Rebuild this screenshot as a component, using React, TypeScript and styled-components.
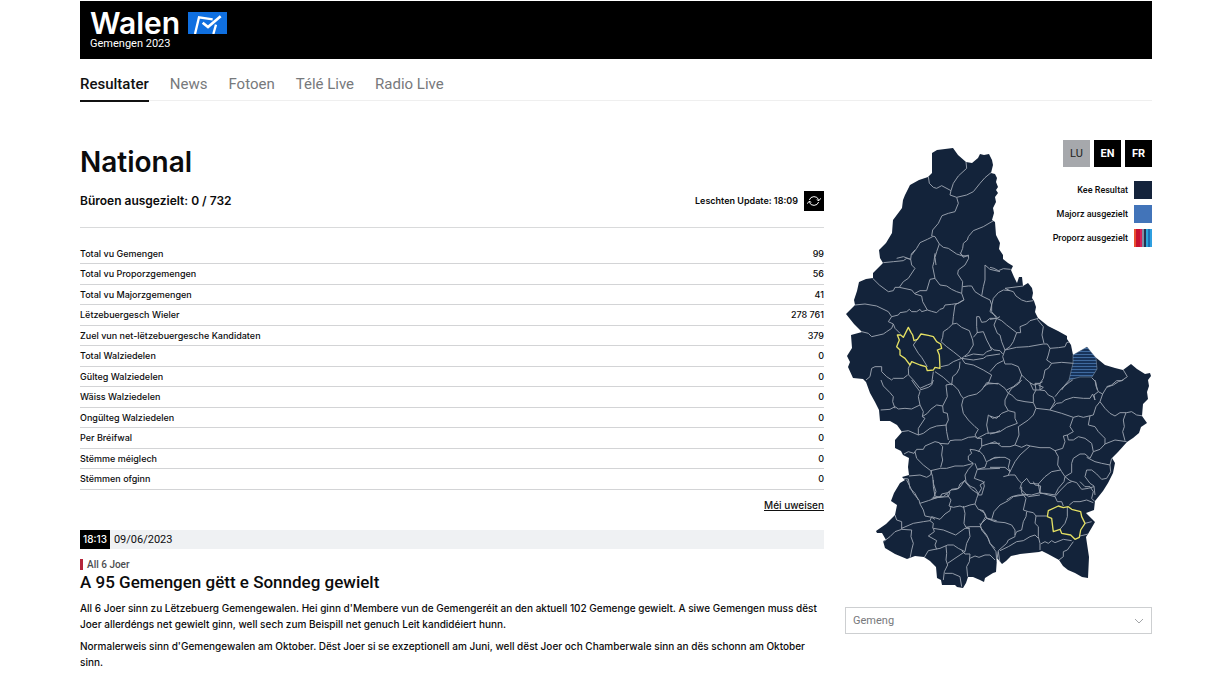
import React from "react";
import styled, { createGlobalStyle } from "styled-components";

const display = `Inter, "Liberation Sans", sans-serif`;

const GlobalStyle = createGlobalStyle`
  * { box-sizing: border-box; }
  body {
    margin: 0;
    background: #fff;
    color: #0b0b0c;
    font-family: Roboto, "Liberation Sans", sans-serif;
  }
  button, select { font-family: inherit; }
`;

const Page = styled.div`
  padding: 1px 72px 16px 80px;
`;

const Header = styled.header`
  height: 58px;
  padding: 8px 10px;
  background: #000;
  color: #fff;
`;

const Brand = styled.div`
  display: flex;
  align-items: center;
  gap: 8px;
  height: 28px;
`;

const BrandName = styled.span`
  font-family: ${display};
  font-size: 30px;
  line-height: 28px;
  font-weight: 600;
`;

const BrandSub = styled.div`
  font-size: 11px;
  line-height: 14px;
`;

const Nav = styled.nav`
  display: flex;
  gap: 21px;
  height: 42px;
  border-bottom: 1px solid #efefef;
`;

const NavLink = styled.a<{ $active?: boolean }>`
  height: 43px;
  padding-top: 15px;
  border-bottom: 2px solid ${(p) => (p.$active ? "#111" : "transparent")};
  color: ${(p) => (p.$active ? "#111" : "#77797c")};
  font-size: 15px;
  line-height: 20px;
  font-weight: ${(p) => (p.$active ? 500 : 400)};
  text-decoration: none;
`;

const Columns = styled.main`
  display: grid;
  grid-template-columns: minmax(0, 744fr) minmax(0, 307fr);
  gap: 21px;
  padding-top: 39px;
`;

const Title = styled.h1`
  margin: 4px 0 0;
  font-family: ${display};
  font-size: 28px;
  line-height: 36px;
  font-weight: 600;
`;

const StatusBar = styled.div`
  display: flex;
  align-items: center;
  justify-content: space-between;
  height: 48px;
  padding-bottom: 6px;
  font-family: ${display};
  border-bottom: 1px solid #d9dadb;
`;

const Status = styled.strong`
  font-size: 12px;
  line-height: 20px;
  font-weight: 600;
`;

const Update = styled.div`
  display: flex;
  align-items: center;
  gap: 6px;
  font-size: 9px;
  font-weight: 600;
`;

const RefreshButton = styled.button`
  display: flex;
  align-items: center;
  justify-content: center;
  width: 20px;
  height: 20px;
  padding: 0;
  border: 0;
  background: #000;
  color: #fff;
`;

const Figures = styled.table`
  width: 100%;
  height: 246px;
  margin-top: 16px;
  border-collapse: collapse;
  font-family: ${display};
  font-size: 9px;
  line-height: 12px;

  th, td {
    padding: 0;
    border-bottom: 1px solid #d3d4d6;
    font-weight: 500;
    text-align: left;
  }
  td { text-align: right; }
`;

const MoreRow = styled.div`
  display: flex;
  justify-content: flex-end;
  padding-top: 7px;
`;

const MoreLink = styled.a`
  color: #111;
  font-family: ${display};
  font-size: 10px;
  line-height: 16px;
  font-weight: 500;
  text-decoration: underline;
`;

const DateBar = styled.div`
  display: flex;
  align-items: center;
  gap: 4px;
  height: 19px;
  margin-top: 17px;
  background: #eff1f3;
  font-size: 11px;
  line-height: 19px;
`;

const Clock = styled.time`
  padding: 0 3px;
  background: #000;
  color: #fff;
  font-family: ${display};
  font-size: 10px;
  font-weight: 500;
`;

const Kicker = styled.div`
  margin-top: 10px;
  padding-left: 4px;
  border-left: 3px solid #b5263a;
  color: #4c4d50;
  font-size: 10px;
  line-height: 11px;
  font-weight: 500;
`;

const Headline = styled.h2`
  margin: 2px 0 8px;
  font-size: 17px;
  line-height: 20px;
  font-weight: 500;
`;

const Text = styled.p`
  margin: 0 0 6px;
  font-family: ${display};
  font-size: 10px;
  line-height: 16px;
  font-weight: 500;
`;

const Side = styled.aside`
  position: relative;
`;

const Controls = styled.div`
  position: absolute;
  top: 0;
  right: 0;
  display: flex;
  flex-direction: column;
  align-items: flex-end;
`;

const Languages = styled.div`
  display: flex;
  gap: 4px;
  margin-bottom: 14px;
`;

const LangButton = styled.button<{ $current?: boolean }>`
  width: 27px;
  height: 27px;
  padding: 0;
  border: 0;
  background: ${(p) => (p.$current ? "#a6a8ac" : "#000")};
  color: ${(p) => (p.$current ? "#222" : "#fff")};
  font-size: 11px;
  font-weight: ${(p) => (p.$current ? 400 : 700)};
`;

const LegendItem = styled.div`
  display: flex;
  align-items: center;
  gap: 6px;
  height: 18px;
  margin-bottom: 6px;
  font-size: 9px;
  font-weight: 500;
`;

const Swatch = styled.span<{ $fill: string }>`
  width: 18px;
  height: 18px;
  background: ${(p) => p.$fill};
`;

const MapDrawing = styled.svg`
  display: block;
  width: 100%;
  margin-top: 6px;
`;

const SelectBox = styled.div`
  position: relative;
  margin-top: 15px;
`;

const Select = styled.select`
  display: block;
  width: 100%;
  height: 27px;
  padding: 0 7px;
  border: 1px solid #cdcfd1;
  border-radius: 0;
  appearance: none;
  background: #fff;
  color: #77797c;
  font-size: 11px;
`;

const Chevron = styled.svg`
  position: absolute;
  top: 11px;
  right: 8px;
  pointer-events: none;
`;

const figures: [string, string][] = [
  ["Total vu Gemengen", "99"],
  ["Total vu Proporzgemengen", "56"],
  ["Total vu Majorzgemengen", "41"],
  ["Lëtzebuergesch Wieler", "278 761"],
  ["Zuel vun net-lëtzebuergesche Kandidaten", "379"],
  ["Total Walziedelen", "0"],
  ["Gülteg Walziedelen", "0"],
  ["Wäiss Walziedelen", "0"],
  ["Ongülteg Walziedelen", "0"],
  ["Per Bréifwal", "0"],
  ["Stëmme méiglech", "0"],
  ["Stëmmen ofginn", "0"],
];

const legend: [string, string][] = [
  ["Kee Resultat", "#14233b"],
  ["Majorz ausgezielt", "#4274b9"],
  [
    "Proporz ausgezielt",
    "linear-gradient(90deg,#e8502f 0 2px,#c8102e 2px 6px,#d5205a 6px 8px,#7d8fa5 8px 10px,#26304f 10px 12px,#2aa6dc 12px 14px,#1d6fb5 14px 16px,#2f9fe0 16px)",
  ],
];

const country =
  "932,153 937,150 945,149 953,148 958,155 966,162 972,163 978,158 980,154 984,155 989,154 992,160 993,165 991,173 995,174 997,178 996,182 998,187 996,190 998,193 995,197 996,202 993,208 994,213 992,220 995,222 996,235 1000,243 999,249 1003,255 1003,259 1008,263 1013,266 1011,270 1014,277 1017,283 1019,277 1022,277 1023,286 1028,283 1032,288 1033,293 1032,298 1034,301 1036,307 1035,312 1038,318 1048,326 1058,331 1067,336 1067,339 1071,345 1073,355 1087,347 1094,356 1105,365 1115,368 1123,370 1131,364 1137,369 1145,374 1150,373 1151,376 1148,380 1149,386 1147,392 1148,399 1143,404 1142,416 1147,423 1141,427 1139,433 1133,438 1127,442 1118,452 1112,458 1115,463 1113,473 1108,483 1103,491 1095,501 1094,510 1086,513 1092,519 1095,522 1088,534 1086,537 1089,557 1088,578 1082,577 1075,573 1068,570 1063,566 1059,560 1048,554 1042,551 1039,552 1020,554 1011,556 1006,561 1002,564 997,558 996,572 993,573 985,578 984,582 980,580 973,577 968,577 966,583 963,588 957,587 955,585 942,585 941,580 937,578 936,567 930,561 924,557 915,556 907,559 895,554 885,548 883,541 886,540 882,533 877,533 876,531 886,524 895,515 897,505 891,501 894,493 900,483 905,480 902,477 909,475 908,467 909,458 903,455 901,451 895,448 895,440 902,432 897,425 890,421 880,421 879,410 875,402 870,393 866,382 863,379 853,378 848,367 850,362 847,356 852,348 851,335 862,332 854,324 846,314 855,305 854,300 857,291 859,282 866,279 873,278 873,273 883,263 880,258 879,250 886,243 892,233 893,220 902,208 903,200 905,195 910,185 919,180 928,177 932,173";

/* Municipal borders, traced per map sheet at three units to the map unit. */
const sheets: { x: number; y: number; lines: string[] }[] = [
  {
    x: 840,
    y: 140,
    lines: [
      "265,110 268,130 280,142 290,145 305,137 333,152",
      "378,65 380,85 355,108 340,130 333,152 330,165 350,172 380,165 400,155 420,130 435,113 453,98",
      "350,172 355,190 345,215 325,220 306,227 295,250 278,270 275,288 285,290",
      "278,290 262,298 240,308 230,325 215,345",
      "285,290 298,312 290,335 285,352 288,375",
      "298,312 310,322 325,325 350,342 365,347 385,348",
      "464,240 430,260 400,272 385,290 382,300 370,310 368,325 362,340 370,350",
    ],
  },
  {
    x: 840,
    y: 250,
    lines: [
      "130,38 160,35 190,32 200,25 212,28 214,12 225,0",
      "170,25 190,20 212,28 215,45 225,55 205,85 190,95 178,112",
      "98,85 118,105 145,125 160,122 165,112 178,112 215,120 225,132 245,138 248,155 262,180",
      "225,130 240,122 260,122 270,88 285,85 278,50 282,35 285,10",
      "360,8 370,22 385,15 386,25 375,45 355,60 353,72 368,95 365,130",
      "285,85 300,105 320,108 335,118 350,125 365,130",
      "365,130 372,150 355,160 335,163 315,165 310,175 300,178 290,188 275,184 262,180",
      "262,180 245,185 240,178 230,185 215,185 208,178 200,185 180,188 175,195 155,200",
      "45,165 75,162 110,168 145,185 155,200 145,215 160,222 155,235 140,245 130,252 95,260 85,250 65,245",
      "160,222 165,235 180,250",
      "368,110 385,108 395,108 405,125 425,138 430,110 435,90 435,45 450,58 480,65",
      "425,138 450,150 455,165 450,185 470,200",
      "370,150 345,165 340,200 338,222",
      "338,222 350,220 365,232 388,242 398,270 400,285 385,310 365,325",
      "338,222 325,235 310,245 308,262 303,275 320,290 340,305 365,325",
      "480,200 470,205 450,205 438,215 425,217 418,200 410,200 410,230 412,248 400,262",
      "410,248 430,245 440,270 448,285 455,300 440,305 430,315 400,312 375,320",
      "303,350 325,345 340,335 365,325",
      "365,325 375,340 400,345 430,360 455,375 445,400 430,412",
      "365,325 400,330 430,325 440,318 480,312",
      "360,335 358,355 350,370 338,380 335,405 310,382 285,365",
      "212,340 205,355 206,375 220,390 240,415 262,405 275,400 280,365",
      "78,390 90,380 95,355 105,350 125,350 125,365 140,380 155,390 160,385 190,385 203,375",
      "232,268 220,285 235,310 245,322 262,350",
    ],
  },
  {
    x: 990,
    y: 250,
    lines: [
      "0,52 12,55 25,62 40,56 62,58",
      "100,108 45,115 60,122 70,125 78,138 95,150 110,155 130,152",
      "60,122 40,120 25,128 10,145 5,165 5,185 20,205 35,212 50,225 80,248",
      "80,248 92,248 90,230 110,222 120,212 145,205",
      "142,208 160,230 156,255 162,280",
      "0,208 20,205 12,225 22,250 30,255 35,275 45,300",
      "80,248 70,275 60,290 45,300",
      "45,300 80,292 115,290 160,282 172,282 180,295 205,293 225,290 230,278 240,275",
      "180,295 175,315 170,330 185,340 215,337 250,340",
      "185,340 175,355 165,360 160,385 150,400 132,405 120,398 105,385 95,375 85,350 65,342 45,342 38,320 45,300",
      "38,312 30,302 12,300 0,290",
      "40,332 20,342 0,365",
      "95,375 88,395 70,410 50,420",
      "120,398 130,420 150,420 150,400",
      "238,390 225,405 215,420",
      "305,383 317,395 322,420",
      "400,360 412,380 395,392 380,392 365,405 350,410",
    ],
  },
  {
    x: 840,
    y: 380,
    lines: [
      "123,0 130,18 150,38 160,50 158,65 165,85",
      "122,90 150,88 165,80 175,87 195,85 215,87 225,82 240,75 235,50 240,35 225,15 215,0",
      "240,30 265,22 275,15 280,0",
      "240,75 250,95 247,110 255,115 235,145 235,165",
      "247,110 262,100 272,88 290,75 308,78 310,97 322,100 325,120 318,135 320,155 325,180",
      "308,78 322,50 318,15 335,12 340,15 355,30 362,45 370,55 365,75 370,100 385,120 405,140 415,148 405,165 412,175",
      "370,55 385,48 410,42 425,30 440,8 475,12",
      "185,155 205,152 235,165 250,160 270,145 290,138 320,135",
      "298,190 325,192 330,182 345,180 365,180 385,172 405,170 412,175 425,175 425,200 415,215",
      "412,175 440,160 465,158 480,152",
      "445,160 440,135 445,105 458,115 480,108",
      "192,222 205,215 222,220 230,208 250,208 255,198 285,185 298,188 308,200 305,225 308,240 302,262",
      "225,215 230,235 250,255 272,272 302,265 320,265 345,258 370,258 400,250",
      "400,250 385,240 385,228 395,220 390,208 405,210 420,215 430,225 440,248 435,262 412,268 480,265",
      "425,198 450,190 480,190",
      "440,245 460,235 480,232",
      "272,272 278,290 280,310 288,335 280,355 310,350 328,335 335,328 355,325 360,312 375,302 390,318 405,325 415,340",
      "405,250 412,268 403,295 430,305 433,318 425,345 415,345",
      "400,252 385,268 375,285 378,305",
      "207,288 240,285 260,292 272,285 275,272",
      "185,295 205,297 210,325 225,340 235,360",
      "275,355 290,352 325,350 330,335",
    ],
  },
  {
    x: 990,
    y: 380,
    lines: [
      "-10,12 25,10 45,25 55,40 45,60 45,75 55,92 75,97 75,115 82,130 50,142 30,155 0,162",
      "0,108 20,115 35,100 55,92",
      "55,40 65,45 80,60 105,65 130,68 130,45 138,30 135,10 150,10 158,5",
      "55,40 65,25 85,12 95,0",
      "145,15 160,22 150,30 165,32 175,45 190,52 195,65 180,90",
      "130,68 138,85 130,105 115,120 85,140 87,165 75,195",
      "138,85 165,88 180,90 215,100 250,112 265,108 280,112 310,105 318,80 330,65",
      "195,50 215,25 240,5 248,0",
      "180,88 200,70 215,68 225,60 250,52 280,55 300,55 308,42 315,60 312,45 325,35 318,18 315,0",
      "325,35 338,42 330,65 345,85 360,100 375,108 390,98 410,98 425,95 440,105 460,108",
      "338,42 350,22 370,15 385,5 400,0",
      "408,98 400,120 403,140 398,155 405,182",
      "300,108 295,135 315,140 325,155 345,175 345,192",
      "410,185 375,180 345,192 330,208 310,215 305,190 285,175 265,170 250,180 235,180 232,165 220,168 225,185 218,205 195,212",
      "232,165 250,155 240,140 250,112",
      "195,212 205,230 203,255 215,275 225,290",
      "195,212 180,203 150,203 120,198 110,195 95,202 75,195 60,200 35,200 15,185 0,190",
      "120,198 90,225 75,245 65,265 55,285",
      "0,240 15,232 45,232 60,240 55,262 60,275 45,262 0,262",
      "40,290 60,285 75,285 85,300 95,310 110,295 120,310 145,312 165,290 185,275 212,270",
      "225,290 245,278 245,250 250,235 270,222 285,222 300,235 310,215",
      "290,232 315,245 335,250 360,255 365,235",
      "360,255 362,275 350,295 335,298 320,282 305,270 290,270 285,290 300,310 312,318 315,345",
      "225,290 222,305 205,325 195,345 165,340 150,340 145,312",
      "225,290 240,302 260,308 275,328 295,325 312,320",
      "95,310 90,325 105,340 115,350 150,345",
      "115,345 85,345 65,350 50,360",
    ],
  },
  {
    x: 865,
    y: 480,
    lines: [
      "125,0 145,40 162,60 165,72 175,90 180,108 200,112 210,118",
      "205,0 205,20 210,48 225,52 230,42 248,38 258,30 275,28 285,22 300,0",
      "165,70 190,62 210,55 230,48",
      "245,42 258,60 252,78 265,82 285,78 295,82 315,75 330,72 335,55 340,42 320,28 300,5",
      "295,78 300,100 297,130 303,142",
      "258,80 255,92 240,102 225,118 200,110 195,122 205,130 203,145",
      "330,72 340,88 355,92 362,110 350,130 345,140 315,140 303,142 315,145",
      "345,140 365,165 375,190 390,205",
      "338,45 350,25 345,15 360,5",
      "362,112 375,118 395,122",
      "205,145 235,150 255,158 272,165 300,145 312,145 315,170 305,190 300,215 280,205 265,195 248,195 225,205 190,212",
      "205,145 208,155 190,168 215,182 210,195 215,208",
      "90,105 95,120 110,125 110,148 90,155 75,170 55,185",
      "110,148 140,150 138,170 145,190 140,210 135,235",
      "110,145 145,130 175,125 195,122",
      "190,212 178,232",
      "243,198 245,220 243,240 248,255 238,275 235,300",
      "248,250 270,235 300,215",
      "240,280 262,280 285,290 290,320",
      "290,212 300,222 315,222 313,245 305,260 308,290",
      "315,235 330,228 342,232 360,225 375,225 390,240",
    ],
  },
  {
    x: 980,
    y: 480,
    lines: [
      "0,90 15,100 20,115 45,125 75,128 95,135 105,150 105,170 85,180 80,190 55,212 50,245",
      "0,130 5,150 25,175 30,190 48,215 50,240",
      "35,118 42,95 60,75 85,62 100,50 130,45",
      "0,135 20,115 35,118",
      "125,20 125,38 138,55 130,90 145,95 160,98 168,108 200,108",
      "105,165 110,155 125,150 130,125 138,110 140,95",
      "125,42 155,45 180,38 205,45 225,50",
      "160,5 165,15 182,18 180,38",
      "225,50 240,32 262,10 275,5",
      "225,50 232,65 245,65 250,78",
      "268,75 280,65 300,65 320,60 340,68",
      "300,5 315,20 330,20 340,35 335,55 345,65",
      "168,108 165,130 175,140 175,170 180,190 180,210",
      "60,212 85,200 110,185 130,182 150,170 165,165 175,175",
      "182,192 195,185 205,190 215,182 225,188 250,178 275,182",
      "280,185 262,210 250,215 250,230 237,240",
      "315,130 335,125",
      "300,168 325,162",
      "262,80 262,110 255,130 240,148",
      "55,215 60,250",
    ],
  },
];

const highlights = [
  {
    x: 840,
    y: 250,
    points:
      "205,232 213,247 218,255 222,272 232,268 243,252 265,256 280,260 290,275 302,282 305,295 292,300 298,315 300,355 285,352 280,360 262,362 258,350 240,345 215,335 210,345 195,325 180,315 180,300 170,290 178,270 172,255 182,255 190,262",
  },
  {
    x: 980,
    y: 480,
    points:
      "235,78 205,92 202,110 215,115 218,140 220,155 240,148 245,160 272,165 285,178 298,172 302,150 315,130 305,110 302,95 275,88 265,80 250,83",
  },
];

const at = (x: number, y: number) => `translate(${x} ${y}) scale(0.33333)`;

function CountryMap() {
  return (
    <MapDrawing viewBox="845 146 307 446" role="img" aria-label="Gemengen">
      <defs>
        <pattern id="hatch" width="4" height="3" patternUnits="userSpaceOnUse">
          <rect width="4" height="3" fill="#17335a" />
          <rect width="4" height="1" fill="#3f6a9f" />
        </pattern>
        <clipPath id="land">
          <polygon points={country} />
        </clipPath>
      </defs>
      <polygon points={country} fill="#13233a" />
      <polygon
        points="1073,355 1080,351 1087,347 1096,358 1097,369 1092,377 1080,377 1069,380 1073,363"
        fill="url(#hatch)"
        stroke="#8fa0b3"
        strokeWidth="0.5"
      />
      <g clipPath="url(#land)" fill="none" stroke="#98a1ad" strokeWidth="2.9" strokeLinejoin="round">
        {sheets.map((s, i) => (
          <g key={i} transform={at(s.x, s.y)}>
            {s.lines.map((l) => (
              <polyline key={l} points={l} />
            ))}
          </g>
        ))}
      </g>
      {highlights.map((h) => (
        <polygon
          key={h.points}
          transform={at(h.x, h.y)}
          points={h.points}
          fill="none"
          stroke="#e3df63"
          strokeWidth="4"
          strokeLinejoin="round"
        />
      ))}
    </MapDrawing>
  );
}

export default function App() {
  return (
    <>
      <GlobalStyle />
      <Page>
        <Header>
          <Brand>
            <BrandName>Walen</BrandName>
            <svg width="39" height="22" viewBox="0 0 117 66" aria-hidden="true">
              <rect width="117" height="66" fill="#0f6fe0" />
              <path d="M21 66 33 16 74 22M76 66 84 38" fill="none" stroke="#fff" strokeWidth="7" />
              <path d="M44 32 60 45 98 13" fill="none" stroke="#fff" strokeWidth="8" />
            </svg>
          </Brand>
          <BrandSub>Gemengen 2023</BrandSub>
        </Header>
        <Nav>
          <NavLink href="#resultater" $active>Resultater</NavLink>
          <NavLink href="#news">News</NavLink>
          <NavLink href="#fotoen">Fotoen</NavLink>
          <NavLink href="#tele">Télé Live</NavLink>
          <NavLink href="#radio">Radio Live</NavLink>
        </Nav>
        <Columns>
          <section>
            <Title>National</Title>
            <StatusBar>
              <Status>Büroen ausgezielt: 0 / 732</Status>
              <Update>
                Leschten Update: 18:09
                <RefreshButton aria-label="Aktualiséieren">
                  <svg width="14" height="14" viewBox="0 0 42 42" fill="none" stroke="currentColor" strokeWidth="3">
                    <path d="M7 18A15 15 0 0 1 35 17M35 24A15 15 0 0 1 7 25" />
                    <path d="M29 17 36 20 41 13M1 29 6 22 13 25" />
                  </svg>
                </RefreshButton>
              </Update>
            </StatusBar>
            <Figures>
              <tbody>
                {figures.map(([label, value]) => (
                  <tr key={label}>
                    <th scope="row">{label}</th>
                    <td>{value}</td>
                  </tr>
                ))}
              </tbody>
            </Figures>
            <MoreRow>
              <MoreLink href="#details">Méi uweisen</MoreLink>
            </MoreRow>
            <article>
              <DateBar>
                <Clock>18:13</Clock>
                <span>09/06/2023</span>
              </DateBar>
              <Kicker>All 6 Joer</Kicker>
              <Headline>A 95 Gemengen gëtt e Sonndeg gewielt</Headline>
              <Text>
                All 6 Joer sinn zu Lëtzebuerg Gemengewalen. Hei ginn d'Membere vun de Gemengeréit an den aktuell 102
                Gemenge gewielt. A siwe Gemengen muss dëst Joer allerdéngs net gewielt ginn, well sech zum Beispill net
                genuch Leit kandidéiert hunn.
              </Text>
              <Text>
                Normalerweis sinn d'Gemengewalen am Oktober. Dëst Joer si se exzeptionell am Juni, well dëst Joer och
                Chamberwale sinn an dës schonn am Oktober sinn.
              </Text>
            </article>
          </section>
          <Side>
            <CountryMap />
            <Controls>
              <Languages>
                <LangButton $current>LU</LangButton>
                <LangButton>EN</LangButton>
                <LangButton>FR</LangButton>
              </Languages>
              {legend.map(([label, fill]) => (
                <LegendItem key={label}>
                  {label}
                  <Swatch $fill={fill} />
                </LegendItem>
              ))}
            </Controls>
            <SelectBox>
              <Select aria-label="Gemeng" defaultValue="">
                <option value="">Gemeng</option>
              </Select>
              <Chevron width="10" height="6" viewBox="0 0 10 6" fill="none" stroke="#a3a5a8">
                <path d="M1 1 5 5 9 1" />
              </Chevron>
            </SelectBox>
          </Side>
        </Columns>
      </Page>
    </>
  );
}
